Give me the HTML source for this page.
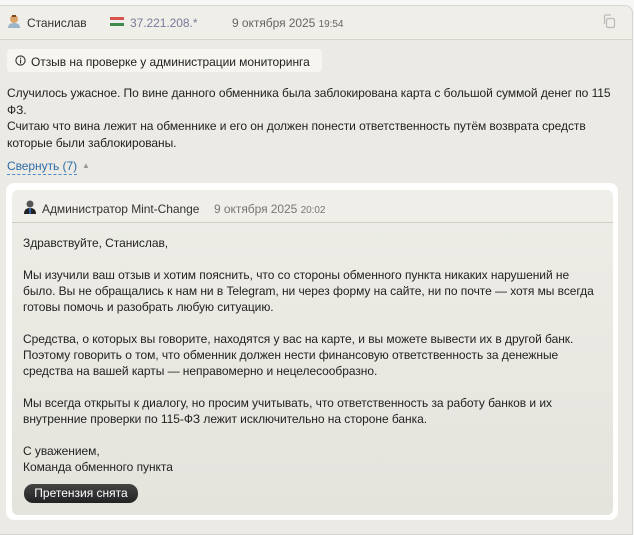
<!DOCTYPE html>
<html><head><meta charset="utf-8"><style>
*{margin:0;padding:0;box-sizing:border-box}
body{width:634px;height:522px;background:#f7f7f5;font-family:"Liberation Sans",sans-serif;font-size:12px;color:#222;overflow:hidden;position:relative}
.card{position:absolute;left:-2px;top:5px;width:635px;height:530px;background:#ebeae4;border:1px solid #d6d5cf;border-radius:0 8px 0 0}
.hdr{position:absolute;left:0;top:0;right:0;height:34px;background:#efeee9;border-bottom:1px solid #d4d3cc;border-radius:0 8px 0 0}
.t{position:absolute;white-space:nowrap;letter-spacing:-0.05px}
.badge{position:absolute;left:7px;top:49px;width:315px;height:23px;background:#f6f5f0;border-radius:4px}
.frame{position:absolute;left:6px;top:183px;width:612px;height:337px;background:#fff;border-radius:8px}
.inner{position:absolute;left:12px;top:190px;width:601px;height:325px;background:linear-gradient(#eeede7,#e4e3dc);border-radius:6px}
.ih{position:absolute;left:0;top:0;right:0;height:33px;background:#efeee9;border-bottom:1px solid #cfcec7;border-radius:6px 6px 0 0}
.btn{position:absolute;left:24px;top:484px;width:114px;height:19px;background:linear-gradient(#444,#222);border-radius:9px;color:#fff;font-size:12px;line-height:19px;text-align:center}
</style></head><body>
<div class="card"><div class="hdr"></div></div>
<svg style="position:absolute;left:7px;top:14px" width="14" height="14"><circle cx="7" cy="5" r="4" fill="#d9a36b"/><rect x="5" y="1" width="4" height="2" fill="#7a4a20"/><path d="M1 14 Q1 9 7 9 Q13 9 13 14Z" fill="#9cb5c8"/></svg>
<div class="t" style="left:27px;top:16px;color:#333">Станислав</div>
<div style="position:absolute;left:110px;top:17px;width:14px;height:3px;background:#d9534f"></div>
<div style="position:absolute;left:110px;top:20px;width:14px;height:3px;background:#eee"></div>
<div style="position:absolute;left:110px;top:23px;width:14px;height:3px;background:#3f8a4f"></div>
<div class="t" style="left:130px;top:16px;color:#7a7a9a">37.221.208.*</div>
<div class="t" style="left:232px;top:16px;color:#666">9 октября 2025 <span style="font-size:10px">19:54</span></div>
<svg style="position:absolute;left:602px;top:14px" width="14" height="15" fill="none" stroke="#bbb" stroke-width="1.2"><rect x="4.5" y="4.5" width="8" height="9" rx="1.5"/><path d="M2.5 10V2.5Q2.5 1 4 1H9"/></svg>
<div class="badge"></div>
<svg style="position:absolute;left:15px;top:55px" width="11" height="11"><circle cx="5.5" cy="5.5" r="4.6" fill="none" stroke="#333" stroke-width="1.1"/><rect x="5" y="4.5" width="1.1" height="4" fill="#333"/><rect x="5" y="2.6" width="1.1" height="1.1" fill="#333"/></svg>
<div class="t" style="left:31px;top:55px;color:#222">Отзыв на проверке у администрации мониторинга</div>
<div class="t" style="left:7px;top:85px;line-height:16.5px">Случилось ужасное. По вине данного обменника была заблокирована карта с большой суммой денег по 115<br>ФЗ.<br>Считаю что вина лежит на обменнике и его он должен понести ответственность путём возврата средств<br>которые были заблокированы.</div>
<div class="t" style="left:7px;top:159px;color:#2f6ca8;border-bottom:1px dashed #4a8acb;line-height:15px">Свернуть (7)</div>
<div class="t" style="left:82px;top:161px;color:#999;font-size:8px">▲</div>
<div class="frame"></div>
<div class="inner"><div class="ih"></div></div>
<svg style="position:absolute;left:24px;top:200px" width="12" height="14"><circle cx="6" cy="4" r="3.5" fill="#555"/><path d="M0 14 Q0 8 6 8 Q12 8 12 14Z" fill="#222"/><rect x="5.3" y="8" width="1.4" height="6" fill="#3a7bd5"/></svg>
<div class="t" style="left:42px;top:202px;color:#333">Администратор Mint-Change</div>
<div class="t" style="left:214px;top:202px;color:#777">9 октября 2025 <span style="font-size:10px">20:02</span></div>
<div class="t" style="left:23px;top:235px;line-height:16px;color:#222">Здравствуйте, Станислав,<br><br>Мы изучили ваш отзыв и хотим пояснить, что со стороны обменного пункта никаких нарушений не<br>было. Вы не обращались к нам ни в Telegram, ни через форму на сайте, ни по почте — хотя мы всегда<br>готовы помочь и разобрать любую ситуацию.<br><br>Средства, о которых вы говорите, находятся у вас на карте, и вы можете вывести их в другой банк.<br>Поэтому говорить о том, что обменник должен нести финансовую ответственность за денежные<br>средства на вашей карты — неправомерно и нецелесообразно.<br><br>Мы всегда открыты к диалогу, но просим учитывать, что ответственность за работу банков и их<br>внутренние проверки по 115-ФЗ лежит исключительно на стороне банка.<br><br>С уважением,<br>Команда обменного пункта</div>
<div class="btn">Претензия снята</div>
</body></html>
